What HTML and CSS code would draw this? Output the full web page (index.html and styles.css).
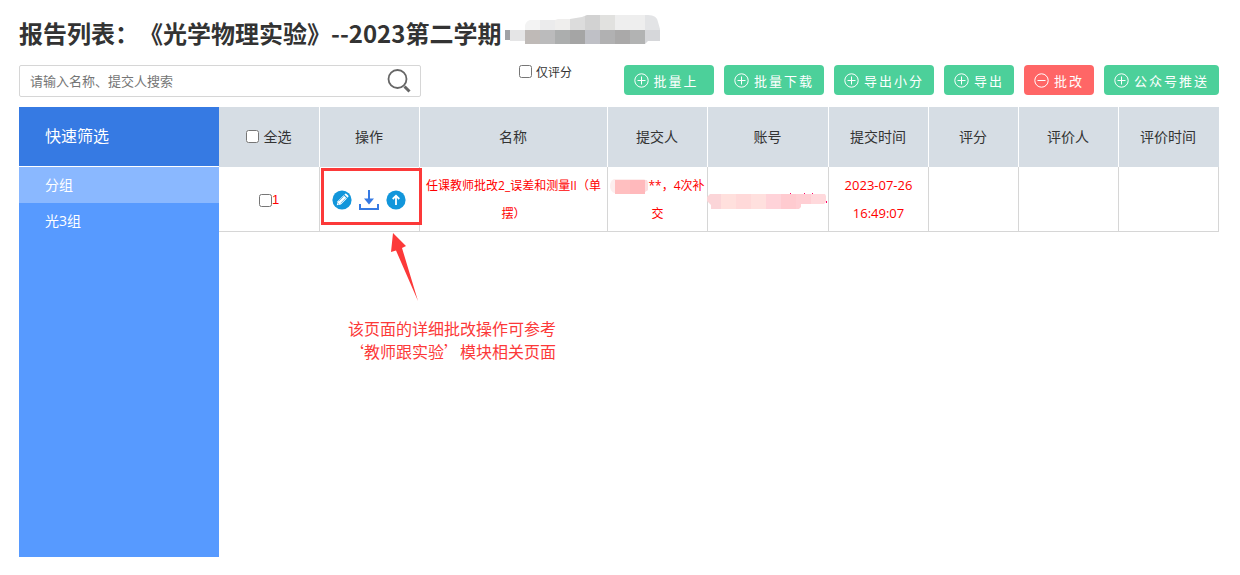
FILE: index.html
```html
<!DOCTYPE html>
<html lang="zh-CN">
<head>
  <meta charset="UTF-8">
  <meta name="viewport" content="width=device-width, initial-scale=1.0">
  <title>报告列表</title>
  <link rel="stylesheet" href="styles.css">
</head>
<body>
  <!-- 公用图标 -->
  <svg class="symbols" aria-hidden="true">
    <symbol id="icon-plus" viewBox="0 0 15 15">
      <circle cx="7.5" cy="7.5" r="6.7"/>
      <path d="M7.5 3.5v8M3.5 7.5h8"/>
    </symbol>
    <symbol id="icon-minus" viewBox="0 0 15 15">
      <circle cx="7.5" cy="7.5" r="6.7"/>
      <path d="M3.5 7.5h8"/>
    </symbol>
  </svg>

  <div class="container">
    <h1 class="title">报告列表：《光学物理实验》--2023第二学期<svg class="title-mask" viewBox="505 15 155 30" aria-hidden="true">
      <clipPath id="title-clip">
        <path d="M505 30h20v-5q2-5 6-5h24l3-1h12l12-2 5-2h61q9 0 10 7l2 7v12h-12l-3 3H525v-3h-15v-1h-5z"/>
      </clipPath>
      <g clip-path="url(#title-clip)">
        <rect x="525" y="15" width="15" height="15" fill="#f3f3f3"/>
        <rect x="540" y="15" width="15" height="15" fill="#ebebec"/>
        <rect x="555" y="15" width="15" height="15" fill="#efeeed"/>
        <rect x="570" y="15" width="15" height="15" fill="#dcdcdc"/>
        <rect x="585" y="15" width="15" height="15" fill="#d2d2d2"/>
        <rect x="600" y="15" width="15" height="15" fill="#e1e1df"/>
        <rect x="615" y="15" width="30" height="15" fill="#eeeeee"/>
        <rect x="645" y="15" width="15" height="15" fill="#e3e4e6"/>
        <rect x="505" y="30" width="5" height="15" fill="#a0a2a6"/>
        <rect x="510" y="30" width="15" height="15" fill="#e5e5e6"/>
        <rect x="525" y="30" width="15" height="15" fill="#bfbab7"/>
        <rect x="540" y="30" width="15" height="15" fill="#bbbbbc"/>
        <rect x="555" y="30" width="15" height="15" fill="#acaeae"/>
        <rect x="570" y="30" width="15" height="15" fill="#a5a5a5"/>
        <rect x="585" y="30" width="15" height="15" fill="#bfc0c6"/>
        <rect x="600" y="30" width="15" height="15" fill="#b1b1b2"/>
        <rect x="615" y="30" width="15" height="15" fill="#aaa9a9"/>
        <rect x="630" y="30" width="15" height="15" fill="#b2b3b3"/>
        <rect x="645" y="30" width="15" height="15" fill="#d6d7da"/>
      </g>
    </svg></h1>

    <div class="toolbar">
      <form class="search">
        <input type="text" class="search-input" placeholder="请输入名称、提交人搜索" aria-label="请输入名称、提交人搜索">
        <button type="button" class="search-btn" aria-label="搜索">
          <svg viewBox="0 0 24 26" width="24" height="26">
            <circle cx="10.5" cy="11" r="9" fill="none" stroke="#666" stroke-width="1.8"/>
            <path d="M17.5 18.5l5 5" fill="none" stroke="#666" stroke-width="3"/>
          </svg>
        </button>
      </form>
      <label class="only-score"><input type="checkbox">仅评分</label>
      <div class="actions">
        <button type="button" class="btn"><svg><use href="#icon-plus"/></svg>批量上&nbsp;</button>
        <button type="button" class="btn"><svg><use href="#icon-plus"/></svg>批量下载</button>
        <button type="button" class="btn"><svg><use href="#icon-plus"/></svg>导出小分</button>
        <button type="button" class="btn"><svg><use href="#icon-plus"/></svg>导出</button>
        <button type="button" class="btn btn-red"><svg><use href="#icon-minus"/></svg>批改</button>
        <button type="button" class="btn"><svg><use href="#icon-plus"/></svg>公众号推送</button>
      </div>
    </div>

    <div class="main">
      <nav class="sidebar">
        <h2 class="sidebar-title">快速筛选</h2>
        <a href="#" class="active">分组</a>
        <a href="#">光3组</a>
      </nav>

      <table class="report-table">
        <colgroup>
          <col class="col-check">
          <col class="col-normal">
          <col>
          <col class="col-normal">
          <col class="col-account">
          <col class="col-normal">
          <col class="col-score">
          <col class="col-normal">
          <col class="col-normal">
        </colgroup>
        <thead>
          <tr>
            <th><label class="check"><input type="checkbox">全选</label></th>
            <th>操作</th>
            <th>名称</th>
            <th>提交人</th>
            <th>账号</th>
            <th>提交时间</th>
            <th>评分</th>
            <th>评价人</th>
            <th>评价时间</th>
          </tr>
        </thead>
        <tbody>
          <tr>
            <td><label class="check row-check"><input type="checkbox">1</label></td>
            <td class="ops-cell">
              <div class="ops">
                <a href="#" aria-label="批改">
                  <svg viewBox="0 0 20 20">
                    <circle cx="10" cy="10" r="9.6" fill="#1296db"/>
                    <path d="M4.8 15.2l.8-4 6-6 3.3 3.3-6 6z" fill="#fff"/>
                    <path d="M12.4 4.5l.8-.7q.7-.5 1.3.1l1.7 1.7q.6.6.1 1.3l-.7.8z" fill="#fff"/>
                    <path d="M6.7 11.3l5-5M8.6 13.3l5-5" stroke="#1296db" stroke-width=".6"/>
                    <path d="M5.6 13l1.4 1.4" stroke="#1296db" stroke-width=".7"/>
                  </svg>
                </a>
                <a href="#" aria-label="下载">
                  <svg viewBox="0 0 20 20">
                    <path d="M10 0v10M1 14v5h18v-5" fill="none" stroke="#367ae3" stroke-width="2"/>
                    <path d="M5 8.5h10l-5 6z" fill="#367ae3"/>
                  </svg>
                </a>
                <a href="#" aria-label="上传">
                  <svg viewBox="0 0 20 20">
                    <circle cx="10" cy="10" r="9.6" fill="#1296db"/>
                    <path d="M10 15V6M6.7 9L10 5.7 13.3 9" fill="none" stroke="#fff" stroke-width="1.8"/>
                  </svg>
                </a>
              </div>
              <div class="mark-box"></div>
              <svg class="mark-arrow" viewBox="0 0 28 68" aria-hidden="true">
                <path d="M3 0L16 13l-4 2 16 53L6 17.5 1 19z" fill="#fc3939"/>
              </svg>
              <p class="mark-text">该页面的详细批改操作可参考<br>‘教师跟实验’模块相关页面</p>
            </td>
            <td>任课教师批改2_误差和测量II（单摆）</td>
            <td class="submitter-cell"><svg class="name-mask" viewBox="0 0 38 15" aria-hidden="true">
              <path d="M4 0h30l4 3v8l-5 3H4q-4-2-4-7t4-7z" fill="#fdeeee"/>
              <path d="M5 1h15v14H5z" fill="#ffbfc0"/>
              <path d="M20 1h15v14H20z" fill="#ffb9bc"/>
              <path d="M35 1h2l1 3v7l-3 2z" fill="#fddcde"/>
            </svg>**，4次补交</td>
            <td class="account-cell"><svg class="account-mask" viewBox="0 0 121 18" aria-hidden="true">
              <path d="M3 2h12v15H4v-4L0 9V5z" fill="#fbd5d8"/>
              <path d="M14 2h15v15H14z" fill="#ffe0dd"/>
              <path d="M29 2h15v15H29z" fill="#ffd9d9"/>
              <path d="M44 2h15v15H44z" fill="#ffe0de"/>
              <path d="M59 2h15v15H59z" fill="#ffd3d9"/>
              <path d="M74 2h15v15H74z" fill="#ffcbd0"/>
              <path d="M89 2h15v10h-10v3l-2 2h-3z" fill="#ffcfd4"/>
              <path d="M104 2h14l1 2v6l-2 2h-13z" fill="#ffd9dc"/>
              <path d="M83 1h1v1h-1zM97 1h1v1h-1zM105 1h1v1h-1zM119 9h1v2h-1z" fill="#ff0066"/>
            </svg></td>
            <td class="time-cell">2023-07-26 16:49:07</td>
            <td></td>
            <td></td>
            <td></td>
          </tr>
        </tbody>
      </table>
    </div>
  </div>
</body>
</html>
```
FILE: styles.css
```css
* {
  box-sizing: border-box;
}
body {
  margin: 0;
  background-color: #fff;
  color: #333;
  font-family: "Open Sans", "Noto Sans CJK SC", sans-serif;
  font-size: 14px;
  text-spacing-trim: space-all;
}
a {
  text-decoration: none;
}
button,
input {
  font-family: inherit;
}
input[type="checkbox"] {
  width: 13px;
  height: 13px;
  margin: 0;
}
.symbols {
  position: absolute;
  width: 0;
  height: 0;
}
.container {
  padding: 15px 21px 18px 19px;
}

/* 标题 */
.title {
  display: flex;
  margin: 0 0 14px;
  font-family: "Noto Sans CJK SC", sans-serif;
  font-size: 24px;
  line-height: 36px;
  white-space: nowrap;
}
.title-mask {
  width: 155px;
  height: 30px;
  margin-left: 4px;
}

/* 工具栏 */
.toolbar {
  display: flex;
  align-items: flex-start;
  margin-bottom: 10px;
}
.search {
  display: flex;
  align-items: center;
  width: 402px;
  height: 32px;
  padding: 0 9px 0 10px;
  border: 1px solid #d6d6d6;
  border-radius: 2px;
}
.search-input {
  flex: 1;
  min-width: 0;
  padding: 0;
  border: 0;
  outline: none;
  font-size: 13px;
}
.search-input::placeholder {
  color: #757575;
}
.search-btn {
  display: flex;
  padding: 0;
  border: 0;
  background: none;
  cursor: pointer;
}
.only-score {
  display: flex;
  gap: 4px;
  margin-left: 98px;
  font-size: 12px;
  line-height: 16px;
}
.actions {
  display: flex;
  gap: 10px;
  margin-left: auto;
}
.btn {
  display: flex;
  align-items: center;
  gap: 5px;
  height: 30px;
  padding: 0 10px;
  border: 0;
  border-radius: 4px;
  background-color: #4cd09a;
  color: #fff;
  font-size: 13px;
  letter-spacing: 2px;
  white-space: nowrap;
  cursor: pointer;
}
.btn-red {
  background-color: #ff6666;
}
.btn svg {
  width: 15px;
  height: 15px;
  fill: none;
  stroke: #fff;
}

/* 左侧筛选 */
.main {
  display: flex;
  align-items: flex-start;
}
.sidebar {
  flex: 0 0 200px;
  min-height: 450px;
  background-color: #579aff;
}
.sidebar-title {
  margin: 0;
  padding-left: 26px;
  border-bottom: 1px solid #fff;
  background-color: #367ae3;
  color: #fff;
  font-size: 16px;
  font-weight: normal;
  line-height: 59px;
}
.sidebar a {
  display: block;
  padding-left: 26px;
  color: #fff;
  font-size: 14px;
  line-height: 36px;
}
.sidebar a.active {
  background-color: #8ab8ff;
}

/* 报告表格 */
.report-table {
  flex: 1;
  width: 100%;
  table-layout: fixed;
  border-collapse: separate;
  border-spacing: 0;
}
.col-check {
  width: 101px;
}
.col-normal {
  width: 100px;
}
.col-account {
  width: 121px;
}
.col-score {
  width: 90px;
}
.report-table th {
  height: 60px;
  padding: 0 1px 2px 0;
  border-right: 1px solid #fff;
  background-color: #d6dde4;
  font-weight: normal;
}
.report-table th:last-child {
  border-right-color: #d6dde4;
}
.report-table td {
  height: 65px;
  padding: 5px 5px 3px;
  border-right: 1px solid #d6d6d6;
  border-bottom: 1px solid #d6d6d6;
  color: #f00;
  font-size: 12px;
  line-height: 28px;
  text-align: center;
}
.report-table .submitter-cell {
  padding: 5px 2px 3px;
}
.report-table .time-cell {
  padding: 4px 5px;
  font-size: 13px;
}
.check {
  display: flex;
  align-items: center;
  justify-content: center;
  gap: 5px;
}
.row-check {
  gap: 0;
  font-family: "Liberation Sans", sans-serif;
  font-size: 13px;
}
.ops {
  display: flex;
  justify-content: center;
  gap: 7px;
}
.ops a,
.ops svg {
  display: block;
  width: 20px;
  height: 20px;
}
.name-mask {
  width: 38px;
  height: 15px;
  vertical-align: middle;
}
.report-table .account-cell {
  padding: 8px 0 4px;
}
.account-mask {
  display: block;
  width: 121px;
  height: 18px;
  margin-left: -1px;
}

/* 操作说明标注 */
.report-table .ops-cell {
  position: relative;
  padding: 6px 6px 4px 5px;
}
.mark-box {
  position: absolute;
  top: 1px;
  left: 1px;
  width: 101px;
  height: 57px;
  border: 3px solid #fc3939;
}
.mark-arrow {
  position: absolute;
  top: 66px;
  left: 70px;
  width: 28px;
  height: 68px;
}
.mark-text {
  position: absolute;
  top: 150px;
  left: 28px;
  margin: 0;
  color: #fc3939;
  font-family: "Noto Sans CJK SC", sans-serif;
  font-size: 16px;
  line-height: 23px;
  white-space: nowrap;
}
```
